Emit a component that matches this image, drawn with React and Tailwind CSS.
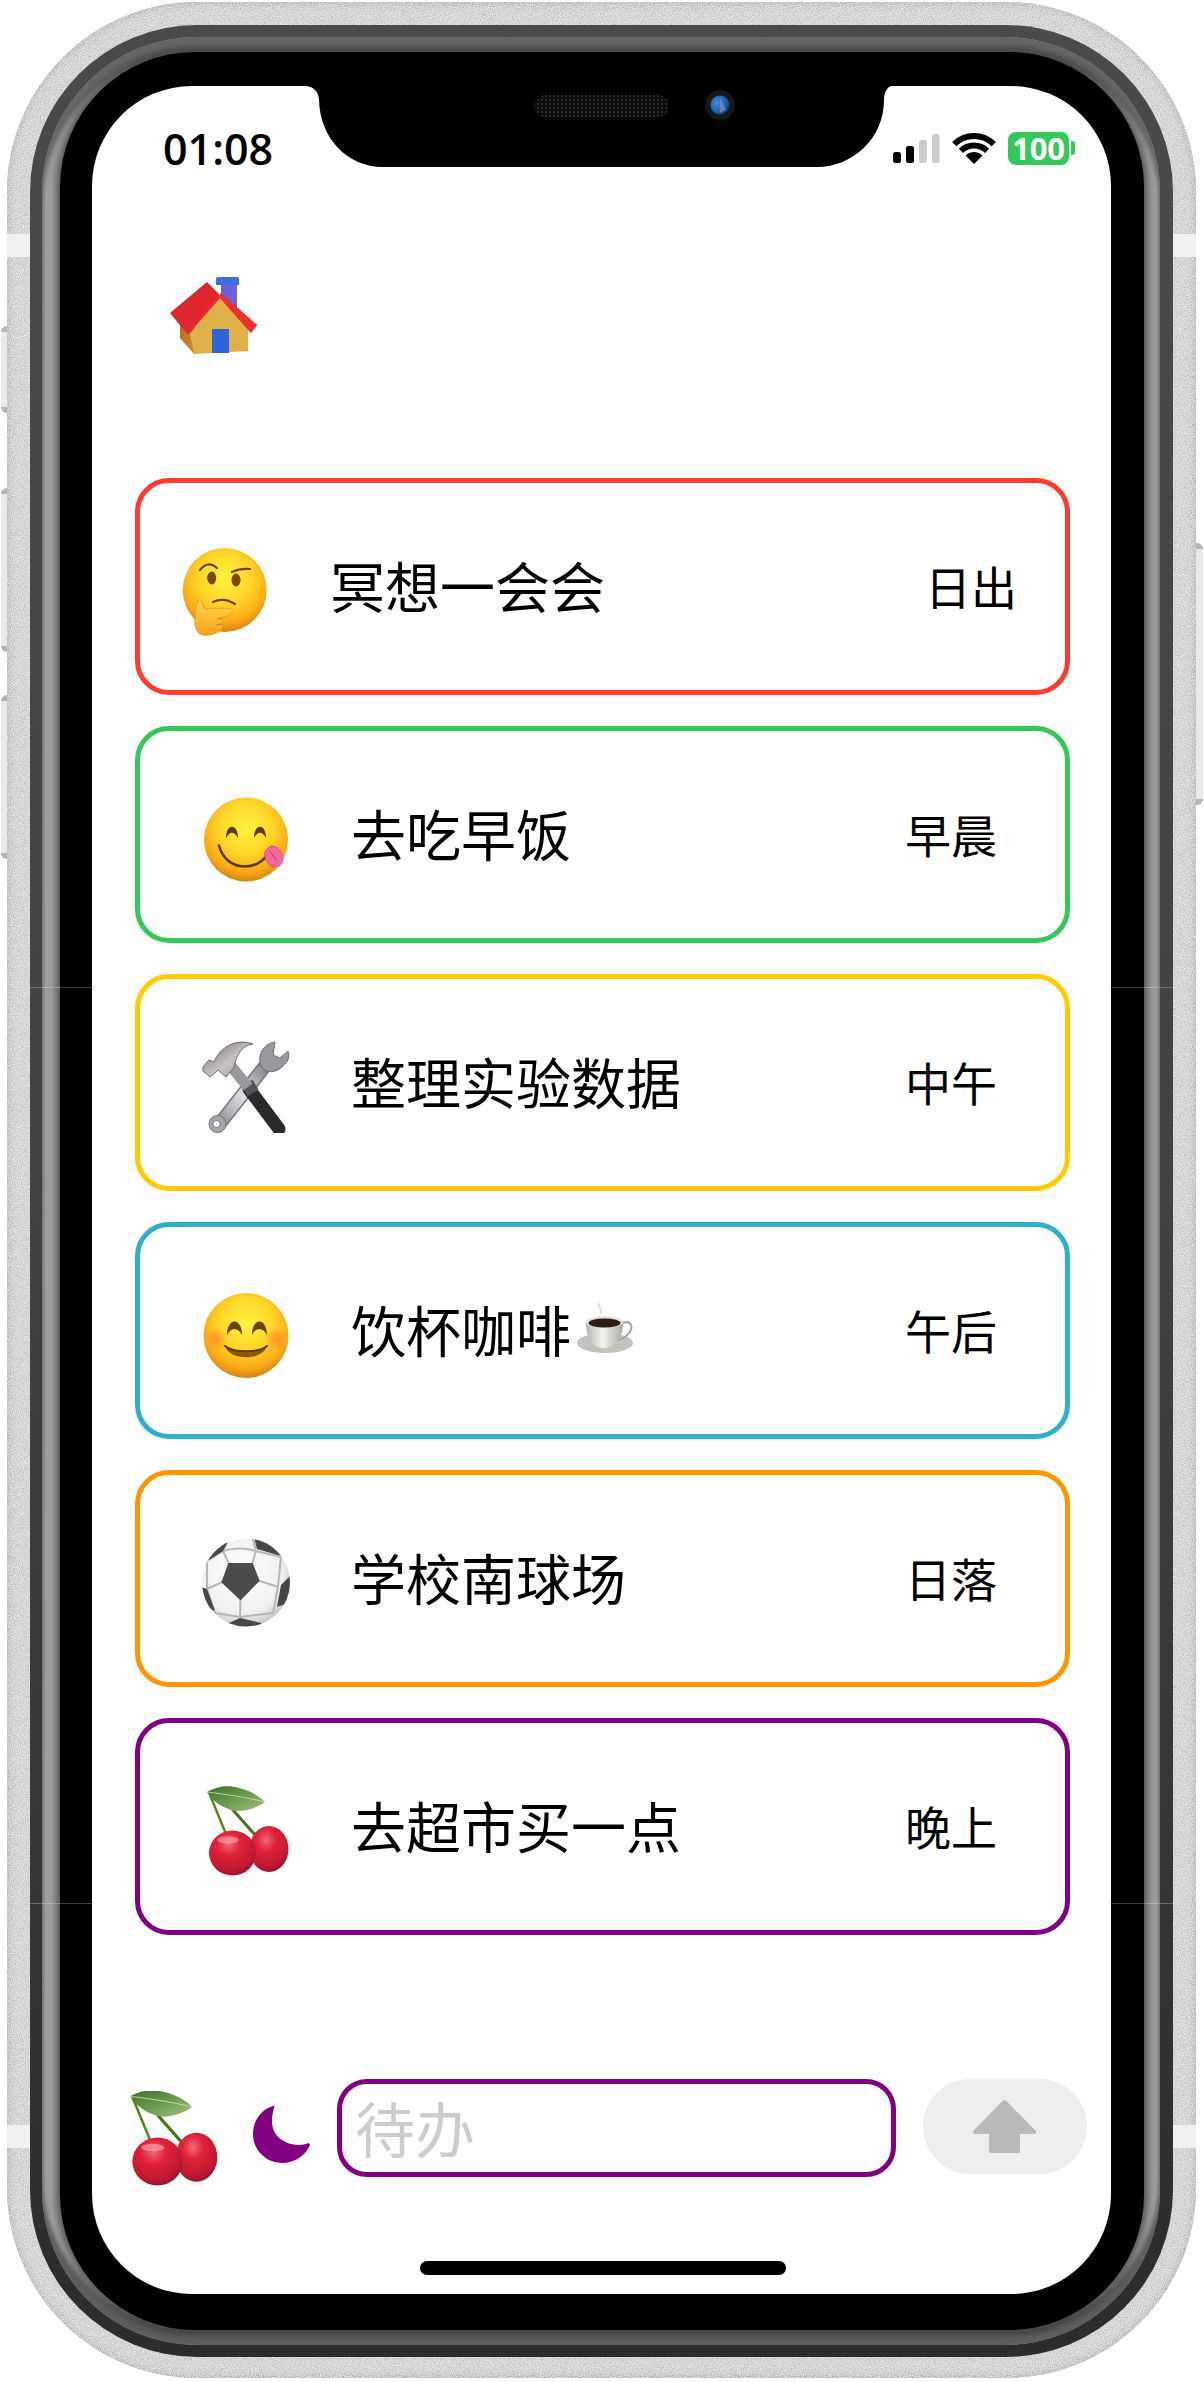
const FACE = (
  <radialGradient id="face" cx="50%" cy="36%" r="64%">
    <stop offset="0%" stopColor="#fff43f" />
    <stop offset="50%" stopColor="#ffd428" />
    <stop offset="82%" stopColor="#f9a916" />
    <stop offset="100%" stopColor="#d5841a" />
  </radialGradient>
);

function Thinking() {
  return (
    <svg viewBox="0 0 90 100" className="w-[90px] h-[100px] shrink-0">
      <defs>
        {FACE}
        <linearGradient id="hand" x1="0" y1="0" x2="0" y2="1">
          <stop offset="0%" stopColor="#ffd84a" />
          <stop offset="100%" stopColor="#f5a21e" />
        </linearGradient>
      </defs>
      <circle cx="44.7" cy="53" r="42" fill="url(#face)" />
      <path d="M20 33 Q28 23 37 31" fill="none" stroke="#6f4408" strokeWidth="2.2" strokeLinecap="round" />
      <path d="M52 35 Q60 31 70 32" fill="none" stroke="#6f4408" strokeWidth="2.2" strokeLinecap="round" />
      <ellipse cx="31.7" cy="41" rx="4.5" ry="6.5" fill="#7a4a0a" />
      <ellipse cx="56" cy="43" rx="4.5" ry="6.5" fill="#7a4a0a" />
      <path d="M33 65 Q44 60 55 67" fill="none" stroke="#6f4408" strokeWidth="2.2" strokeLinecap="round" />
      <path d="M18 63 C21 62 23 66 24 72 C32 72 44 70 52 72 C54 74 52 76 49 78 L42 81 C44 85 43 90 41 93 C37 97 28 99 22 98 C17 96 14 90 15 83 C15 76 16 69 18 63 Z" fill="url(#hand)" stroke="#e8971f" strokeWidth="0.8" />
      <path d="M38 82 L42 81 M37 88 L42 87" stroke="#c97d12" strokeWidth="1.2" strokeLinecap="round" />
    </svg>
  );
}

function Yum() {
  return (
    <svg viewBox="0 0 90 100" className="w-[90px] h-[100px] shrink-0">
      <defs>{FACE}</defs>
      <circle cx="45" cy="54.5" r="42" fill="url(#face)" />
      <path d="M25 53 C25 38 37 38 37 53 C33 46 29 46 25 53 Z" fill="#5e3a0a" />
      <path d="M53 53 C53 38 65 38 65 53 C61 46 57 46 53 53 Z" fill="#5e3a0a" />
      <path d="M18 60.5 C22 76 34 81.5 44 81.5 C56 81.5 66 74 71 62" fill="none" stroke="#5e3a0a" strokeWidth="2.6" strokeLinecap="round" />
      <path d="M66 64 C70 59 76 61 79 66 C83 71 83 78 78 81 C73 84 67 80 65 75 C63 71 63 67 66 64 Z" fill="#ee6a9a" stroke="#d8487f" strokeWidth="0.8" />
      <path d="M69 66 L75 75" stroke="#c9447a" strokeWidth="1.2" strokeLinecap="round" />
    </svg>
  );
}

function Tools() {
  return (
    <svg viewBox="0 0 90 100" className="w-[90px] h-[100px] shrink-0">
      <defs>
        <linearGradient id="steel" x1="0" y1="1" x2="1" y2="0">
          <stop offset="0%" stopColor="#8f8c92" />
          <stop offset="45%" stopColor="#dedde2" />
          <stop offset="100%" stopColor="#77757c" />
        </linearGradient>
        <linearGradient id="hammerhead" x1="0" y1="0" x2="1" y2="1">
          <stop offset="0%" stopColor="#6e6c72" />
          <stop offset="55%" stopColor="#c9c4c0" />
          <stop offset="100%" stopColor="#88868b" />
        </linearGradient>
      </defs>
      <path d="M18.5 91 L68 28" stroke="#76747a" strokeWidth="14" strokeLinecap="round" />
      <path d="M18.5 91 L68 28" stroke="url(#steel)" strokeWidth="11" strokeLinecap="round" />
      <circle cx="16.5" cy="91" r="8.5" fill="#a6a4aa" stroke="#77757c" strokeWidth="1" />
      <circle cx="15.5" cy="91" r="3.6" fill="#fff" stroke="#66646a" strokeWidth="0.8" />
      <path d="M74 9 C62 11 56 22 60 33 C64 41 76 40 82 33 C87 29 89 24 87 18 L79 25 L72 22 L74 9 Z" fill="#9a989e" stroke="#707076" strokeWidth="1" />
      <path d="M48 56 L78 96" stroke="#2a2a2c" strokeWidth="13" strokeLinecap="round" />
      <path d="M46 50 L52 60" stroke="#55545a" strokeWidth="13" />
      <path d="M30 33 L47 54" stroke="#9a989e" strokeWidth="11" />
      <path d="M2 34 L8 27 L13 29 C19 14 35 5 52 11 C42 12 35 21 33 35 L25 44 L17 37 L9 44 L2 38 Z" fill="url(#hammerhead)" stroke="#6e6c72" strokeWidth="1" strokeLinejoin="round" />
    </svg>
  );
}

function Smile() {
  return (
    <svg viewBox="0 0 90 100" className="w-[90px] h-[100px] shrink-0">
      <defs>
        {FACE}
        <radialGradient id="blush">
          <stop offset="0%" stopColor="#ff8a2a" stopOpacity="0.85" />
          <stop offset="100%" stopColor="#ff8a2a" stopOpacity="0" />
        </radialGradient>
      </defs>
      <circle cx="45" cy="54.5" r="42.5" fill="url(#face)" />
      <circle cx="15" cy="58" r="12" fill="url(#blush)" />
      <circle cx="75" cy="58" r="12" fill="url(#blush)" />
      <path d="M26 54 C26 36 41 36 41 54 C37 46 30 46 26 54 Z" fill="#6b430c" />
      <path d="M51 54 C51 36 66 36 66 54 C62 46 55 46 51 54 Z" fill="#6b430c" />
      <path d="M24 65 C32 72 58 72 66 65 C62 80 28 80 24 65 Z" fill="#8a5a10" />
      <path d="M24 65 C32 72 58 72 66 65" fill="none" stroke="#5e3a0a" strokeWidth="2" strokeLinecap="round" />
    </svg>
  );
}

function Ball() {
  return (
    <svg viewBox="0 0 90 100" className="w-[90px] h-[100px] shrink-0">
      <defs>
        <radialGradient id="ballbg" cx="45%" cy="40%" r="62%">
          <stop offset="0%" stopColor="#ffffff" />
          <stop offset="75%" stopColor="#f0f0f0" />
          <stop offset="100%" stopColor="#c4c4c4" />
        </radialGradient>
        <clipPath id="ballclip">
          <circle cx="45" cy="53.5" r="44" />
        </clipPath>
      </defs>
      <circle cx="45" cy="53.5" r="44" fill="url(#ballbg)" />
      <g clipPath="url(#ballclip)">
        <path d="M28 35 L22 22 L28 10 M51 35 L55 22 L52 10 M22 22 Q38 17 55 22 M57.5 51.5 L77 58 L80 28 M55 22 L80 28 M39.5 70 L39 88 M21.5 53 L6 60 L6 32 M22 22 L6 32 M77 58 L72 84 L39 88 M6 60 L14 84 L39 88" fill="none" stroke="#b6b6b6" strokeWidth="2" />
        <path d="M28 35 L51 35 L57.5 51.5 L39.5 70 L21.5 53 Z" fill="#4b4b4d" stroke="#4b4b4d" strokeWidth="2" strokeLinejoin="round" />
        <path d="M53 8 L82 8 L80 27 L56 20 Z" fill="#47474a" />
        <path d="M28 10 L5 30 L8 31 L22 22 Z" fill="#47474a" />
        <path d="M80 56 L92 44 L92 72 L76 78 Z" fill="#47474a" />
        <path d="M0 58 L6 60 L14 82 L0 76 Z" fill="#47474a" />
        <path d="M28 94 L39 89 L60 94 L60 100 L28 100 Z" fill="#47474a" />
      </g>
    </svg>
  );
}

function Cherries({ className, viewBox }) {
  return (
    <svg viewBox={viewBox} className={className}>
      <defs>
        <radialGradient id="cherry" cx="42%" cy="30%" r="72%">
          <stop offset="0%" stopColor="#ef6a78" />
          <stop offset="35%" stopColor="#e02238" />
          <stop offset="80%" stopColor="#c01a33" />
          <stop offset="100%" stopColor="#96122b" />
        </radialGradient>
        <linearGradient id="leaf" x1="0" y1="0" x2="1" y2="1">
          <stop offset="0%" stopColor="#3f6f27" />
          <stop offset="100%" stopColor="#9cc27a" />
        </linearGradient>
      </defs>
      <path d="M9 18 L25 57" stroke="#5c8320" strokeWidth="2.4" strokeLinecap="round" />
      <path d="M32 33 L55 59" stroke="#47711b" strokeWidth="3" strokeLinecap="round" />
      <ellipse cx="68" cy="72" rx="19.5" ry="23" fill="url(#cherry)" />
      <ellipse cx="31.5" cy="76" rx="23.5" ry="22.5" fill="url(#cherry)" />
      <ellipse cx="27" cy="63" rx="11" ry="3.5" fill="#f7b4ba" opacity="0.55" />
      <path d="M6 15 C16 9 28 8 38 11 C50 14 58 19 64 25 C54 32 40 36 30 33 C18 29 10 22 6 15 Z" fill="url(#leaf)" />
      <path d="M6 15 C22 17 44 20 64 25" fill="none" stroke="#d3e3b4" strokeWidth="0.8" />
    </svg>
  );
}

function Coffee() {
  return (
    <svg viewBox="575 1300 62 56" className="w-[62px] h-[56px] ml-[4px] -mt-[5px] shrink-0">
      <defs>
        <linearGradient id="cup" x1="0" y1="0" x2="1" y2="0">
          <stop offset="0%" stopColor="#b5b3ac" />
          <stop offset="45%" stopColor="#f4f3ee" />
          <stop offset="100%" stopColor="#a8a69f" />
        </linearGradient>
      </defs>
      <ellipse cx="605" cy="1343" rx="28" ry="10" fill="#c4c2bc" />
      <path d="M620 1324 C632 1318 634 1328 628 1334 C625 1338 620 1340 616 1341" fill="none" stroke="#a5a39d" strokeWidth="2" />
      <path d="M586 1322 C586 1338 592 1348 604 1348 C616 1348 623 1338 623 1322 Z" fill="url(#cup)" />
      <ellipse cx="604.5" cy="1322" rx="18.5" ry="6" fill="#e4e2dc" />
      <ellipse cx="604.5" cy="1323" rx="16" ry="4.6" fill="#2f1c12" />
      <path d="M600 1303 C596 1307 604 1309 600 1314" fill="none" stroke="#dcdcdc" strokeWidth="2" />
    </svg>
  );
}

function Card({ color, Icon, title, label, first, extra }) {
  return (
    <div className={`flex items-center justify-between h-[217px] border-[5px] rounded-[34px] ${first ? "pl-[40px] pr-[48px]" : "pl-[61px] pr-[68px]"}`} style={{ borderColor: color }}>
      <div className="flex items-center">
        <Icon />
        <div className="ml-[60px] pb-[5px] text-[55px] leading-none text-black whitespace-nowrap">{title}</div>
        {extra}
      </div>
      <div className="pb-[3px] text-[46px] leading-none text-black whitespace-nowrap">{label}</div>
    </div>
  );
}

function Notch() {
  return (
    <svg viewBox="0 0 604 82" className="absolute left-[208px] top-0 w-[604px] h-[82px]">
      <defs>
        <pattern id="mesh" width="4" height="4" patternUnits="userSpaceOnUse">
          <rect width="4" height="4" fill="#0c0c0c" />
          <rect x="1" y="1" width="2" height="2" fill="#2a2a2a" />
        </pattern>
        <radialGradient id="lens" cx="35%" cy="40%" r="70%">
          <stop offset="0%" stopColor="#3d8ae0" />
          <stop offset="70%" stopColor="#1f5fa8" />
          <stop offset="100%" stopColor="#0e2f55" />
        </radialGradient>
      </defs>
      <path d="M5 0 C13 0 19 6 19 14 C20 52 47 81 83 81 H517 C553 81 584 52 584 14 C584 6 588 0 592 0 Z" fill="#000" />
      <rect x="234" y="9" width="135" height="22" rx="11" fill="url(#mesh)" />
      <circle cx="420" cy="19" r="15" fill="#14181e" />
      <circle cx="420" cy="19" r="9.5" fill="url(#lens)" />
      <path d="M420 11 L426 24 L420 27 Z" fill="#8a97a5" opacity="0.6" />
    </svg>
  );
}

function StatusIcons() {
  return (
    <div className="flex items-center pr-[36px]">
      <svg viewBox="893 134 47 29" className="w-[47px] h-[29px]">
        <rect x="893" y="152" width="8" height="11" rx="2.5" fill="#000" />
        <rect x="906" y="146" width="8" height="17" rx="2.5" fill="#000" />
        <rect x="919" y="140" width="8" height="23" rx="2.5" fill="#cccccc" />
        <rect x="932" y="134" width="7.5" height="29" rx="2.5" fill="#cccccc" />
      </svg>
      <svg viewBox="952 132 44 33" className="ml-[12px] w-[44px] h-[33px]">
        <path d="M954.2 144.2 A28 28 0 0 1 993.8 144.2" fill="none" stroke="#000" strokeWidth="6" />
        <path d="M960.9 150.9 A18.5 18.5 0 0 1 987.1 150.9" fill="none" stroke="#000" strokeWidth="6" />
        <path d="M974 164 L965.5 155.5 A12 12 0 0 1 982.5 155.5 Z" fill="#000" />
      </svg>
      <div className="ml-[12px] w-[61px] h-[33px] rounded-[8px] bg-[#34c759] flex items-center justify-center text-white text-[31px] font-bold leading-none font-['Open_Sans',sans-serif]">100</div>
      <div className="ml-[2px] w-[4px] h-[14px] rounded-r-[3px] bg-[#34c759]" />
    </div>
  );
}

const Stripe = ({ className }) => <div className={`absolute h-[23px] w-[23px] bg-[#f1f1f1] ${className}`} />;
const Hair = ({ className }) => <div className={`absolute h-px bg-white/25 ${className}`} />;
const SideKey = ({ className }) => <div className={`absolute w-[9px] bg-[#e9e9e9] border-y-[6px] border-[#b4b4b4] ${className}`} />;

export default function App() {
  return (
    <div className="relative w-[1204px] h-[2382px] bg-white overflow-hidden font-['Noto_Sans_CJK_SC',sans-serif]">
      <SideKey className="left-px top-[326px] h-[87px] rounded-l-[6px]" />
      <SideKey className="left-px top-[488px] h-[164px] rounded-l-[6px]" />
      <SideKey className="left-px top-[695px] h-[164px] rounded-l-[6px]" />
      <SideKey className="left-[1194px] top-[543px] h-[262px] rounded-r-[6px]" />

      <div className="absolute left-[7px] top-[2px] w-[1189px] h-[2376px] rounded-[190px] bg-[#bfbfbf] shadow-[inset_0_0_7px_2px_#9c9c9c] overflow-hidden pl-[23px] pr-[23px] pt-[23px] pb-[21px]">
        <svg className="absolute inset-0 w-full h-full">
          <filter id="grain">
            <feTurbulence type="fractalNoise" baseFrequency="0.9" numOctaves="2" />
            <feColorMatrix values="0 0 0 0 1  0 0 0 0 1  0 0 0 0 1  1.6 0 0 0 -0.35" />
          </filter>
          <rect width="100%" height="100%" filter="url(#grain)" opacity="0.8" />
        </svg>
        <div className="relative h-full rounded-[167px] bg-gradient-to-b from-[#4a4a4a] via-[#424242] to-[#2c2c2c] pl-[12px] pr-[13px] pt-[12px] pb-[12px]">
          <div className="h-full rounded-[155px] bg-[#a0a0a0] shadow-[inset_0_15px_4px_#666666,inset_0_-15px_4px_#5e5e5e] pl-[18px] pr-[16px] pt-[15px] pb-[15px]">
            <div className="h-full rounded-[135px] bg-black shadow-[0_0_9px_3px_rgba(0,0,0,0.55)] pl-[32px] pr-[33px] pt-[34px] pb-[36px]">
              <div className="relative flex flex-col h-full rounded-[100px] bg-white overflow-hidden">
                <Notch />
                <div className="flex items-center justify-between h-[124px] shrink-0">
                  <div className="pl-[71px] text-[43px] font-semibold leading-none text-black font-['Open_Sans',sans-serif]">01:08</div>
                  <StatusIcons />
                </div>

                <div className="mt-[65px] pl-[78px] h-[82px] shrink-0">
                  <svg viewBox="170 275 90 82" className="w-[90px] h-[82px]">
                    <defs>
                      <linearGradient id="roof" x1="0" y1="0" x2="1" y2="1">
                        <stop offset="0%" stopColor="#d62430" />
                        <stop offset="100%" stopColor="#ee2a2a" />
                      </linearGradient>
                      <linearGradient id="side" x1="0" y1="0" x2="1" y2="0">
                        <stop offset="0%" stopColor="#b9722a" />
                        <stop offset="100%" stopColor="#dd8a30" />
                      </linearGradient>
                    </defs>
                    <path d="M221 285 H237 V312 H221 Z" fill="#6a63d8" />
                    <path d="M216 279 Q216 277 218 277 H237 Q239 277 239 279 V285 H216 Z" fill="#3a6fdd" />
                    <path d="M180 320 V338 L194 354 L200 330 Z" fill="url(#side)" />
                    <path d="M190 334 L220 296 L248 322 V351 L194 354 Z" fill="#e0b148" />
                    <rect x="212" y="329" width="17" height="24" fill="#2f63dc" />
                    <path d="M170 313 L207 282 L221 296 L257 325 L251 333 L220 298 L188 335 Z" fill="url(#roof)" />
                    <path d="M221 293 L257 325 L251 333 L220 298 L190 331 Z" fill="#f03030" />
                  </svg>
                </div>

                <div className="mt-[121px] pl-[43px] pr-[41px] flex flex-col gap-[31px] shrink-0">
                  <Card first color="#ff3b30" Icon={Thinking} title="冥想一会会" label="日出" />
                  <Card color="#34c759" Icon={Yum} title="去吃早饭" label="早晨" />
                  <Card color="#ffcc00" Icon={Tools} title="整理实验数据" label="中午" />
                  <Card color="#30b0c7" Icon={Smile} title="饮杯咖啡" label="午后" extra={<Coffee />} />
                  <Card color="#ff9500" Icon={Ball} title="学校南球场" label="日落" />
                  <Card color="#800080" Icon={() => <Cherries viewBox="0 0 90 100" className="w-[90px] h-[100px] shrink-0" />} title="去超市买一点" label="晚上" />
                </div>

                <div className="mt-[144px] h-[98px] pl-[38px] flex items-center shrink-0">
                  <Cherries viewBox="6 10 81 89" className="w-[87px] h-[95px] mt-[20px] shrink-0" />
                  <svg viewBox="253 2105 58 58" className="ml-[36px] w-[58px] h-[58px] mt-[12px] shrink-0">
                    <path d="M273 2106 C262 2109 253 2120 253 2134 C253 2150 266 2163 282 2163 C295 2163 306 2155 310 2145 C310 2143 308 2143 306 2144 C292 2148 271 2140 272 2120 C272 2115 273 2112 274 2108 C275 2106 274 2105.5 273 2106 Z" fill="#800080" />
                  </svg>
                  <input readOnly placeholder="待办" className="ml-[26px] w-[559px] h-[98px] shrink-0 border-[5px] border-[#800080] rounded-[30px] bg-white pl-[13px] pb-[3px] text-[60px] leading-none outline-none placeholder:text-[#cccccc]" />
                  <div className="ml-[27px] w-[164px] h-[95px] self-start shrink-0 rounded-[48px] bg-[#eeeeee] flex items-center justify-center">
                    <svg viewBox="972 2100 66 55" className="w-[66px] h-[55px]">
                      <path d="M1004.5 2103 L1034 2133 H1018 V2152 H991 V2133 H975 Z" fill="#b9b9b9" stroke="#b9b9b9" strokeWidth="4" strokeLinejoin="round" />
                    </svg>
                  </div>
                </div>

                <div className="mt-[84px] ml-[328px] w-[366px] h-[14px] rounded-full bg-black shrink-0" />
              </div>
            </div>
          </div>
        </div>
      </div>

      <Stripe className="left-[7px] top-[234px]" />
      <Stripe className="left-[1173px] top-[234px]" />
      <Stripe className="left-[7px] top-[2125px]" />
      <Stripe className="left-[1173px] top-[2125px]" />
      <Hair className="left-[30px] w-[62px] top-[987px]" />
      <Hair className="left-[1111px] w-[63px] top-[987px]" />
      <Hair className="left-[30px] w-[62px] top-[1903px]" />
      <Hair className="left-[1111px] w-[63px] top-[1903px]" />
    </div>
  );
}
